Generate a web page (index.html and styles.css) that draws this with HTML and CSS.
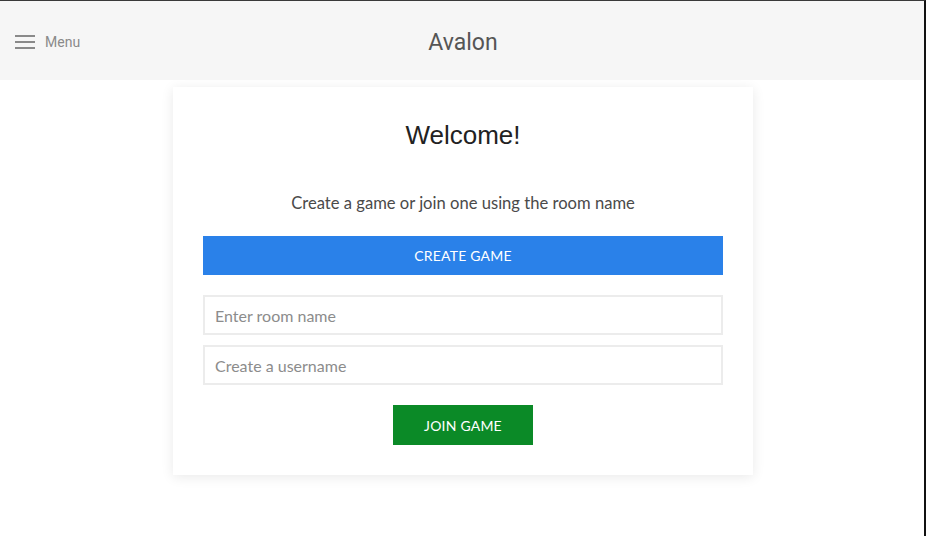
FILE: index.html
```html
<!DOCTYPE html>
<html>
<head>
<meta charset="utf-8">
<link rel="stylesheet" href="styles.css">
</head>
<body>
<div class="frame">
  <header class="topbar">
    <div class="menu">
      <svg class="burger" width="20" height="14" viewBox="0 0 20 14"><rect x="0" y="0" width="20" height="2" fill="#8a8a8a"/><rect x="0" y="6" width="20" height="2" fill="#8a8a8a"/><rect x="0" y="12" width="20" height="2" fill="#8a8a8a"/></svg>
      <span class="menu-label">Menu</span>
    </div>
    <div class="title">Avalon</div>
  </header>
  <main class="main">
    <section class="card">
      <h1 class="welcome">Welcome!</h1>
      <p class="sub">Create a game or join one using the room name</p>
      <button class="btn btn-create">CREATE GAME</button>
      <input class="field" type="text" placeholder="Enter room name">
      <input class="field" type="text" placeholder="Create a username">
      <div class="join-row"><button class="btn btn-join">JOIN GAME</button></div>
    </section>
  </main>
</div>
</body>
</html>
```
FILE: styles.css
```css
html, body { margin: 0; padding: 0; background: #fff; }
body { width: 926px; height: 536px; overflow: hidden; }
.frame {
  box-sizing: border-box;
  width: 926px; height: 536px;
  border-top: 1px solid #3a3a3a;
  border-right: 2px solid #111;
  display: flex; flex-direction: column;
}
.topbar {
  position: relative;
  height: 79px;
  padding-left: 2px;
  background: #f6f6f6;
  display: flex; align-items: center; justify-content: center;
  flex-shrink: 0;
}
.menu {
  position: absolute; left: 15px; top: 33px;
  display: flex; align-items: center; gap: 10px;
}
.burger { display: block; }
.menu-label { font-family: Roboto, "Liberation Sans", sans-serif; font-size: 14px; color: #8a8a8a; }
.title { font-family: Roboto, "Liberation Sans", sans-serif; font-size: 23px; color: #555; margin-top: 3px; }
.main { display: flex; justify-content: center; padding-top: 7px; padding-left: 2px; }
.card {
  box-sizing: border-box;
  width: 580px;
  height: 388px;
  background: #fff;
  padding: 30px 30px 0;
  box-shadow: 0 2px 12px rgba(0,0,0,0.09);
  display: flex; flex-direction: column;
}
.welcome {
  margin: 2px 0 0;
  text-align: center;
  font-family: "Liberation Sans", Arial, sans-serif;
  font-weight: normal;
  font-size: 26px;
  line-height: 32px;
  color: #222;
}
.sub {
  margin: 42px 0 0;
  text-align: center;
  font-family: Lato, "Open Sans", sans-serif;
  font-size: 16.6px;
  line-height: 20px;
  color: #4a4a4a;
}
.btn {
  border: none;
  color: #fff;
  font-family: Lato, "Open Sans", sans-serif;
  font-size: 14px;
  letter-spacing: 0.2px;
  cursor: pointer;
}
.btn-create {
  margin-top: 23px;
  height: 39px;
  width: 100%;
  background: #2a81e9;
}
.field {
  box-sizing: border-box;
  width: 100%;
  height: 40px;
  border: 2px solid #ececec;
  padding: 0 10px;
  font-family: Lato, "Open Sans", sans-serif;
  font-size: 16px;
  color: #333;
  outline: none;
}
.btn-create + .field { margin-top: 20px; }
.field + .field { margin-top: 10px; }
.field::placeholder { color: #8c8c8c; }
.join-row { display: flex; justify-content: center; margin-top: 20px; }
.btn-join { width: 140px; height: 40px; background: #0b8a27; }
```
